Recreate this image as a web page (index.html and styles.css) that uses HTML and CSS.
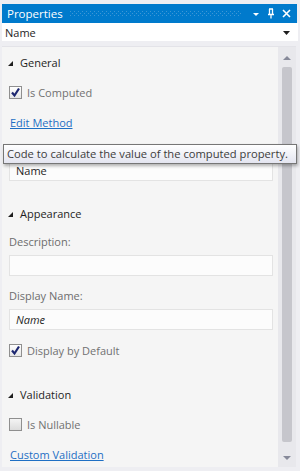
FILE: index.html
```html
<!DOCTYPE html>
<html>
<head>
<meta charset="utf-8">
<link rel="stylesheet" href="styles.css">
</head>
<body>
<div class="window">
  <div class="titlebar">
    <span class="title">Properties</span>
    <span class="grip"></span>
    <svg class="ticon" width="8" height="8" viewBox="0 0 8 8"><polygon points="1,3 7,3 4,6" fill="#fff"/></svg>
    <svg class="ticon" width="8" height="11" viewBox="0 0 8 11"><path d="M2 1 H6 M2.5 1 V6 M5.5 1 V6 M1 6.5 H7 M4 6.5 V10.5" stroke="#fff" stroke-width="1.3" fill="none"/></svg>
    <svg class="ticon close" width="9" height="9" viewBox="0 0 9 9"><path d="M1 1 L8 8 M8 1 L1 8" stroke="#fff" stroke-width="1.6" fill="none"/></svg>
  </div>
  <div class="combo">
    <span>Name</span>
    <svg width="7" height="4" viewBox="0 0 7 4"><polygon points="0,0 7,0 3.5,4" fill="#1e1e1e"/></svg>
  </div>
  <div class="panel">
    <div class="content">
      <div class="header"><svg class="tri" width="5" height="5" viewBox="0 0 5 5"><polygon points="5,0 5,5 0,5" fill="#1e1e1e"/></svg>General</div>
      <div class="row"><span class="cb checked"><svg width="11" height="11" viewBox="0 0 11 11"><path d="M2 5.5 L4.5 8.5 L9 1.5" stroke="#1d2770" stroke-width="2.2" fill="none"/></svg></span>Is Computed</div>
      <div class="row"><a class="link">Edit Method</a></div>
      <div class="label first">Name:</div>
      <div class="textbox">Name</div>

      <div class="header sec"><svg class="tri" width="5" height="5" viewBox="0 0 5 5"><polygon points="5,0 5,5 0,5" fill="#1e1e1e"/></svg>Appearance</div>
      <div class="label">Description:</div>
      <div class="textbox"></div>
      <div class="label gap">Display Name:</div>
      <div class="textbox italic">Name</div>
      <div class="row cbrow"><span class="cb checked"><svg width="11" height="11" viewBox="0 0 11 11"><path d="M2 5.5 L4.5 8.5 L9 1.5" stroke="#1d2770" stroke-width="2.2" fill="none"/></svg></span>Display by Default</div>

      <div class="header sec2"><svg class="tri" width="5" height="5" viewBox="0 0 5 5"><polygon points="5,0 5,5 0,5" fill="#1e1e1e"/></svg>Validation</div>
      <div class="row"><span class="cb"></span>Is Nullable</div>
      <div class="row"><a class="link">Custom Validation</a></div>
    </div>
    <div class="scrollbar">
      <svg class="arrow" width="8" height="4" viewBox="0 0 8 4"><polygon points="0,4 8,4 4,0" fill="#868999"/></svg>
      <div class="thumb"></div>
      <svg class="arrow" width="8" height="4" viewBox="0 0 8 4"><polygon points="0,0 8,0 4,4" fill="#868999"/></svg>
    </div>
  </div>
  <div class="tooltip">Code to calculate the value of the computed property.</div>
</div>
</body>
</html>
```
FILE: styles.css
```css
html, body {
  margin: 0;
  padding: 0;
}
body {
  background: #eeeef2;
  font-family: "Open Sans", "Noto Sans", sans-serif;
  font-size: 11px;
  color: #1e1e1e;
  width: 300px;
  height: 471px;
  overflow: hidden;
}
.window {
  position: relative;
  padding-top: 4px;
}
.titlebar {
  height: 19px;
  margin: 0 3px 0 2px;
  background: #007acc;
  display: flex;
  align-items: center;
  color: #fff;
}
.title {
  padding-left: 5px;
  font-size: 11.5px;
  line-height: 19px;
}
.grip {
  flex: 1;
  height: 5px;
  margin: 0 10px 0 7px;
  background-image:
    radial-gradient(circle at 0.5px 0.5px, #3d97d6 0.6px, transparent 0.7px),
    radial-gradient(circle at 2.5px 2.5px, #3d97d6 0.6px, transparent 0.7px);
  background-size: 4px 4px;
}
.ticon {
  display: block;
  margin-right: 7px;
}
.ticon.close {
  margin-right: 6px;
}
.combo {
  height: 18px;
  margin: 0 2px;
  background: #fff;
  display: flex;
  align-items: center;
  justify-content: space-between;
  padding: 0 8px 0 3px;
  font-size: 11px;
}
.combo svg {
  display: block;
  margin-top: 2px;
}
.panel {
  margin: 5px 4px 0 2px;
  border-top: 1px solid #e3e3e8;
  background: #f5f5f5;
  display: flex;
  height: 420px;
}
.content {
  flex: 1;
  padding-left: 7px;
  padding-right: 5px;
  overflow: hidden;
}
.header {
  height: 30px;
  display: flex;
  align-items: center;
  font-size: 11px;
  color: #1e1e1e;
}
.tri {
  display: block;
  margin-right: 7px;
  margin-top: 2px;
  margin-left: -1px;
}
.header.sec { margin-top: 17px; }
.header.sec2 { margin-top: 14px; }
.row {
  height: 30px;
  display: flex;
  align-items: center;
  font-size: 11px;
  color: #717171;
}
.cbrow { margin-top: 5px; }
.cb {
  width: 11px;
  height: 11px;
  border: 1px solid #8f8f8f;
  background: linear-gradient(#f4f4f4, #dcdcdc);
  margin-right: 5px;
  display: flex;
  align-items: center;
  justify-content: center;
}
.cb.checked {
  background: linear-gradient(#ffffff, #e6e6e6);
}
.cb svg { display: block; }
.link {
  color: #1e6fc4;
  text-decoration: underline;
  margin-left: 1px;
  font-size: 11px;
}
.label {
  font-size: 11px;
  color: #6d6d6d;
  line-height: 16px;
  margin-top: 6px;
}
.label.first { margin-top: 3px; }
.label.gap { margin-top: 12px; }
.textbox {
  height: 19px;
  margin-top: 5px;
  border: 1px solid #e3e3e3;
  background: #fcfcfc;
  font-size: 11px;
  line-height: 19px;
  padding-left: 6px;
  color: #1e1e1e;
}
.label.first + .textbox { margin-top: 4px; }
.textbox.italic {
  font-style: italic;
}
.scrollbar {
  width: 18px;
  background: #e8e8ec;
  display: flex;
  flex-direction: column;
  align-items: center;
  padding: 9px 0 7px;
  box-sizing: border-box;
}
.arrow { display: block; }
.thumb {
  flex: 1;
  width: 10px;
  margin: 7px 0 14px;
  background: #c6c6cc;
  border-radius: 2px;
}
.tooltip {
  position: absolute;
  left: 3px;
  top: 144px;
  width: 289px;
  height: 18px;
  border: 1px solid #767676;
  background: linear-gradient(#ffffff, #e4e5f0);
  box-shadow: 1px 2px 3px rgba(0,0,0,0.3);
  font-size: 11.2px;
  line-height: 18px;
  padding-left: 3px;
  color: #3c3c3c;
  white-space: nowrap;
  overflow: hidden;
}
```
